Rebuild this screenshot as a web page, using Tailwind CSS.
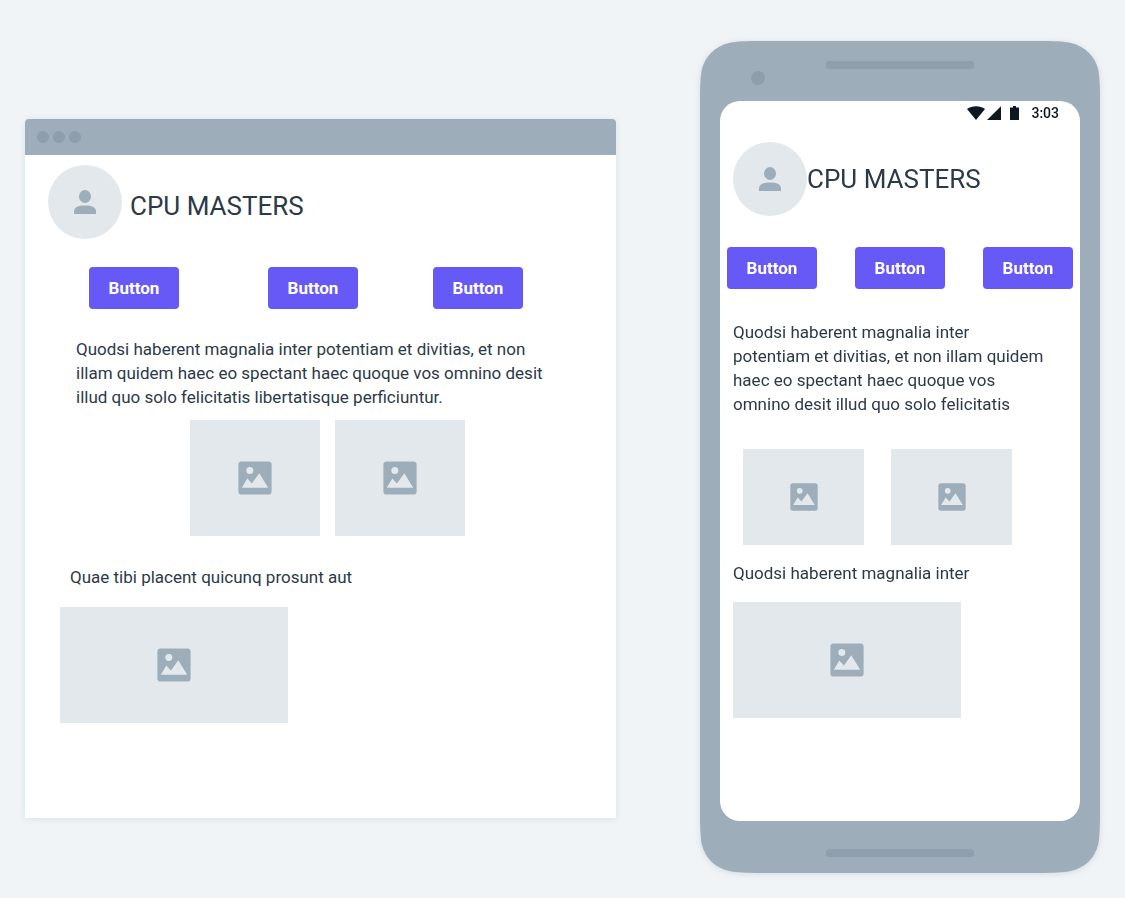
<!DOCTYPE html>
<html lang="en">
<head>
<meta charset="utf-8">
<meta name="viewport" content="width=device-width, initial-scale=1">
<title>CPU Masters</title>
<script src="https://cdn.jsdelivr.net/npm/@tailwindcss/browser@4"></script>
</head>
<body class="min-h-screen bg-[#f0f4f7] font-['Roboto',sans-serif] text-[17px] leading-6 text-[#2c3a47]">
<svg class="hidden" aria-hidden="true">
  <symbol id="picture" viewBox="0 0 34 34">
    <path fill="#9eadba" fill-rule="evenodd" d="M3.5 .4h27a3.1 3.1 0 0 1 3.1 3.1v27a3.1 3.1 0 0 1-3.1 3.1h-27a3.1 3.1 0 0 1-3.1-3.1v-27A3.1 3.1 0 0 1 3.5 .4zM11.8 6a3.5 3.5 0 1 0 0 7a3.5 3.5 0 1 0 0-7zM3.8 26.8h26.4L21.3 12.3l-7.4 10.2-4.6-4.9z"/>
  </symbol>
  <symbol id="person" viewBox="0 0 24 26">
    <ellipse cx="12" cy="7.5" rx="6" ry="6.5" fill="#9eadba"/>
    <path fill="#9eadba" d="M1 25v-2.500C1 18 5.500 16.400 12 16.400S23 18 23 22.500V25z"/>
  </symbol>
</svg>
<main class="flex items-start gap-[84px] px-[25px] pt-[41px] pb-[25px]">

  <section class="mt-[78px] min-w-0 flex-1 overflow-hidden rounded-t bg-white pb-[95px] shadow-[0_1px_6px_rgba(60,80,100,0.12)]" aria-label="Browser layout">
    <div class="flex h-9 items-center gap-1 bg-[#9eadba] px-3">
      <span class="size-3 rounded-full bg-[#8f9eac]"></span>
      <span class="size-3 rounded-full bg-[#8f9eac]"></span>
      <span class="size-3 rounded-full bg-[#8f9eac]"></span>
    </div>
    <header class="flex items-center gap-2 pt-[10px] pl-[23px]">
      <span class="flex size-[74px] items-center justify-center rounded-full bg-[#e2e8ec]">
        <svg class="h-[26px] w-6" aria-hidden="true"><use href="#person"/></svg>
      </span>
      <h1 class="pt-2 text-[26px] leading-8">CPU MASTERS</h1>
    </header>
    <div class="mt-7 flex pl-16 font-bold text-white">
      <button type="button" class="h-[42px] w-[90px] rounded bg-[#6759f5]">Button</button>
      <button type="button" class="ml-[89px] h-[42px] w-[90px] rounded bg-[#6759f5]">Button</button>
      <button type="button" class="ml-[75px] h-[42px] w-[90px] rounded bg-[#6759f5]">Button</button>
    </div>
    <p class="mt-7 pl-[51px] whitespace-nowrap">Quodsi haberent magnalia inter potentiam et divitias, et non<br>illam quidem haec eo spectant haec quoque vos omnino desit<br>illud quo solo felicitatis libertatisque perficiuntur.</p>
    <div class="mt-[11px] flex gap-[15px] pl-[165px]">
      <div class="flex h-[116px] w-[130px] items-center justify-center bg-[#e2e8ec]"><svg class="size-[34px]" aria-hidden="true"><use href="#picture"/></svg></div>
      <div class="flex h-[116px] w-[130px] items-center justify-center bg-[#e2e8ec]"><svg class="size-[34px]" aria-hidden="true"><use href="#picture"/></svg></div>
    </div>
    <p class="mt-[29px] pl-[45px]">Quae tibi placent quicunq prosunt aut</p>
    <div class="mt-[18px] ml-[35px] flex h-[116px] w-[228px] items-center justify-center bg-[#e2e8ec]"><svg class="size-[34px]" aria-hidden="true"><use href="#picture"/></svg></div>
  </section>

  <section class="relative w-[400px] shrink-0 px-5 drop-shadow-[0_1px_3px_rgba(60,80,100,0.15)]" aria-label="Phone layout">
    <svg class="absolute inset-0 size-full" viewBox="0 0 400 832" preserveAspectRatio="none" aria-hidden="true">
      <path fill="#9eadba" d="M0 60C0 46 .4 36 1.700 29C5 15 15 5 30 1.700C37 .4 46 0 60 0H340C354 0 363 .4 370 1.700C385 5 395 15 398.300 29C399.600 36 400 46 400 60V772C400 786 399.600 796 398.300 803C395 817 385 827 370 830.300C363 831.600 354 832 340 832H60C46 832 37 831.600 30 830.300C15 827 5 817 1.700 803C.4 796 0 786 0 772z"/>
    </svg>
    <div class="relative grid h-[60px] grid-cols-[1fr_148px_1fr]">
      <span class="mt-[30px] ml-[31px] size-[14px] rounded-full bg-[#8f9eac]"></span>
      <span class="mt-5 h-2 rounded-full bg-[#8f9eac]"></span>
    </div>
    <div class="relative rounded-[20px] bg-white pb-[103px]">
      <div class="flex h-6 items-center justify-end pr-[21px] text-[#10181f]">
        <svg class="h-[14px] w-[54px]" viewBox="0 0 54 14" fill="currentColor" aria-hidden="true">
          <path d="M9 14L0 3C5-.6 13-.6 18 3z"/>
          <path d="M20 14L34 .3V14z"/>
          <path d="M43 1.500H46V0H49V1.500H52V14H43z"/>
        </svg>
        <time class="ml-[10px] text-sm font-medium">3:03</time>
      </div>
      <header class="flex items-center pt-[17px] pl-[13px]">
        <span class="flex size-[74px] items-center justify-center rounded-full bg-[#e2e8ec]">
          <svg class="h-[26px] w-6" aria-hidden="true"><use href="#person"/></svg>
        </span>
        <h2 class="text-[26px] leading-8">CPU MASTERS</h2>
      </header>
      <div class="mt-[31px] flex justify-between px-[7px] font-bold text-white">
        <button type="button" class="h-[42px] w-[90px] rounded bg-[#6759f5]">Button</button>
        <button type="button" class="h-[42px] w-[90px] rounded bg-[#6759f5]">Button</button>
        <button type="button" class="h-[42px] w-[90px] rounded bg-[#6759f5]">Button</button>
      </div>
      <p class="mt-[31px] pl-[13px] whitespace-nowrap">Quodsi haberent magnalia inter<br>potentiam et divitias, et non illam quidem<br>haec eo spectant haec quoque vos<br>omnino desit illud quo solo felicitatis</p>
      <div class="mt-[33px] flex gap-[27px] pl-[23px]">
        <div class="flex h-24 w-[121px] items-center justify-center bg-[#e2e8ec]"><svg class="size-7" aria-hidden="true"><use href="#picture"/></svg></div>
        <div class="flex h-24 w-[121px] items-center justify-center bg-[#e2e8ec]"><svg class="size-7" aria-hidden="true"><use href="#picture"/></svg></div>
      </div>
      <p class="mt-4 pl-[13px]">Quodsi haberent magnalia inter</p>
      <div class="mt-[17px] ml-[13px] flex h-[116px] w-[228px] items-center justify-center bg-[#e2e8ec]"><svg class="size-[34px]" aria-hidden="true"><use href="#picture"/></svg></div>
    </div>
    <div class="relative flex h-[52px] justify-center pt-7">
      <span class="h-2 w-[148px] rounded-full bg-[#8f9eac]"></span>
    </div>
  </section>
</main>
</body>
</html>
